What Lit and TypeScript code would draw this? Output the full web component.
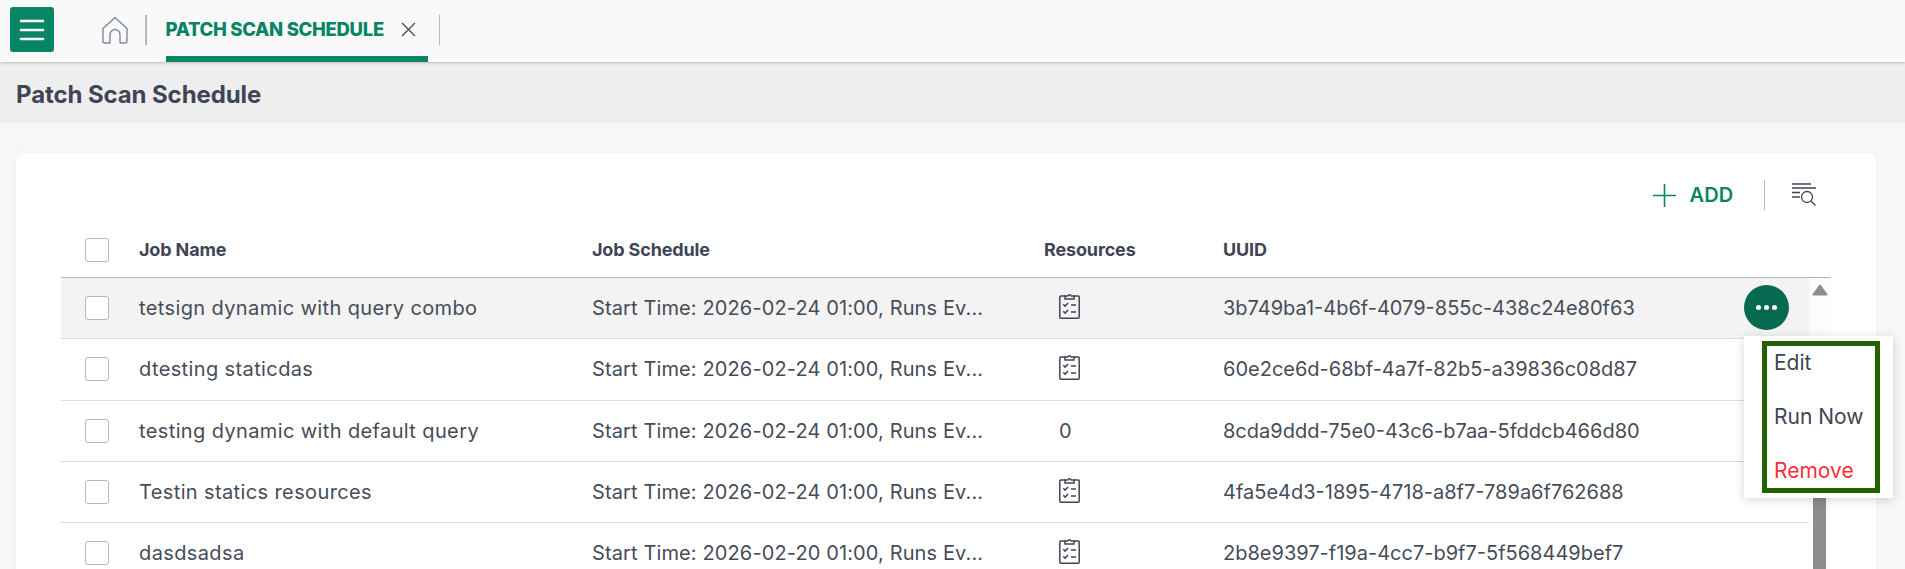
import { LitElement, html, css, svg } from 'lit';
import { customElement } from 'lit/decorators.js';

type Job = { name: string; schedule: string; resources: string | null; uuid: string };

const JOBS: Job[] = [
  { name: 'tetsign dynamic with query combo', schedule: '2026-02-24', resources: null, uuid: '3b749ba1-4b6f-4079-855c-438c24e80f63' },
  { name: 'dtesting staticdas', schedule: '2026-02-24', resources: null, uuid: '60e2ce6d-68bf-4a7f-82b5-a39836c08d87' },
  { name: 'testing dynamic with default query', schedule: '2026-02-24', resources: '0', uuid: '8cda9ddd-75e0-43c6-b7aa-5fddcb466d80' },
  { name: 'Testin statics resources', schedule: '2026-02-24', resources: null, uuid: '4fa5e4d3-1895-4718-a8f7-789a6f762688' },
  { name: 'dasdsadsa', schedule: '2026-02-20', resources: null, uuid: '2b8e9397-f19a-4cc7-b9f7-5f568449bef7' },
];

const clipboard = svg`<svg width="21" height="27" viewBox="0 0 21 27" fill="none" stroke="#3f4554" stroke-width="1.5">
  <path d="M6.500 4H1.800a1 1 0 0 0-1 1v20.200a1 1 0 0 0 1 1h17.400a1 1 0 0 0 1-1V5a1 1 0 0 0-1-1H14.500"/>
  <path d="M6 7V4h2.800a1.800 1.800 0 0 1 3.400 0H15v3z"/>
  <path d="M4.300 12.300l1.800 1.800 3-3.200M4.300 19.300l1.800 1.800 3-3.200M12 13h5M12 20h5"/>
</svg>`;

@customElement('app-root')
class AppRoot extends LitElement {
  static styles = css`
    :host {
      display: block;
      height: 569px;
      overflow: hidden;
      background: #f7f7f7;
      font-family: Inter, 'Liberation Sans', sans-serif;
      color: #3f4554;
    }
    .topbar {
      height: 62px;
      box-sizing: border-box;
      display: flex;
      align-items: center;
      background: #f9f9f9;
      box-shadow: 0 1px 3px rgba(0, 0, 0, 0.22);
      position: relative;
      padding: 0 0 3px 10px;
    }
    .menu-btn {
      width: 44px;
      height: 45px;
      border-radius: 3px;
      background: #088565;
      display: flex;
      align-items: center;
      justify-content: center;
    }
    .home {
      margin-left: 48px;
      display: flex;
    }
    .sep {
      width: 1.5px;
      height: 30px;
      background: #b5b8bc;
    }
    .sep.first {
      margin-left: 17px;
    }
    .tab {
      width: 262px;
      margin-left: 19px;
      height: 100%;
      box-sizing: border-box;
      display: flex;
      align-items: center;
      position: relative;
      color: #088565;
      font-weight: 800;
      font-size: 18.500px;
      letter-spacing: -0.3px;
      padding-bottom: 2px;
    }
    .tab::after {
      content: '';
      position: absolute;
      left: 0;
      right: 0;
      bottom: -3px;
      height: 6px;
      background: #088565;
    }
    .tab svg {
      margin-left: 17px;
      margin-top: 2px;
    }
    .tab-sep {
      margin-left: 11px;
    }
    .title {
      height: 61px;
      box-sizing: border-box;
      display: flex;
      align-items: center;
      padding: 3px 0 0 16px;
      background: #eeeeee;
      font-size: 24px;
      font-weight: 700;
      letter-spacing: -0.1px;
    }
    .card {
      margin: 30px 29px 0 16px;
      height: 500px;
      box-sizing: border-box;
      background: #fff;
      border-radius: 8px;
      padding: 0 45px;
      box-shadow: 0 0 6px rgba(0, 0, 0, 0.03);
      position: relative;
    }
    .tools {
      height: 69px;
      box-sizing: border-box;
      display: flex;
      align-items: center;
      justify-content: flex-end;
      padding: 27px 15px 12px 0;
    }
    .add {
      display: flex;
      align-items: center;
      color: #088565;
      font-weight: 600;
      font-size: 20px;
      letter-spacing: 0.2px;
    }
    .add svg {
      margin-right: 13px;
    }
    .tool-sep {
      width: 1.5px;
      height: 30px;
      background: #b5b8bc;
      margin: 0 26px 0 30px;
    }
    .row {
      display: grid;
      grid-template-columns: 54px 453px 452px 179px 1fr;
      align-items: center;
      padding-left: 24px;
      font-size: 20px;
      color: #474c59;
    }
    .name {
      letter-spacing: 0.38px;
    }
    .schedule {
      letter-spacing: 0.12px;
    }
    .head {
      height: 55px;
      font-size: 18px;
      font-weight: 700;
      color: #3f4554;
      letter-spacing: -0.15px;
      border-bottom: 1.500px solid #b0b3b8;
    }
    .body {
      display: grid;
      grid-template-columns: 1fr 22px;
    }
    .rows .row {
      height: 61.250px;
      box-sizing: border-box;
      border-bottom: 1.500px solid #dcdcdc;
      position: relative;
    }
    .rows .row.active {
      background: #f3f3f3;
    }
    .box {
      width: 24px;
      height: 24px;
      box-sizing: border-box;
      border: 1px solid #b5b8bc;
      border-radius: 3px;
      background: #fff;
    }
    .res {
      padding-left: 15px;
      display: flex;
    }
    .res svg {
      margin-bottom: 5px;
    }
    .dots {
      position: absolute;
      right: 20px;
      top: 7px;
      width: 45px;
      height: 45px;
      border-radius: 50%;
      background: #066a50;
      display: flex;
      align-items: center;
      justify-content: center;
      gap: 3px;
    }
    .dots i {
      width: 5px;
      height: 5px;
      border-radius: 50%;
      background: #fff;
    }
    .scroll {
      background: #fcfcfc;
      position: relative;
      height: 300px;
    }
    .arrow {
      position: absolute;
      left: 3px;
      top: 6px;
      display: block;
    }
    .thumb {
      position: absolute;
      left: 4px;
      top: 75px;
      bottom: 0;
      width: 13px;
      background: #8c8c8c;
    }
    .popup {
      position: absolute;
      left: 1728px;
      top: 183px;
      width: 149px;
      height: 162px;
      box-sizing: border-box;
      background: #fff;
      box-shadow: 0 2px 10px rgba(0, 0, 0, 0.16);
      padding: 5px 13px 5px 18px;
    }
    .popup-inner {
      height: 152px;
      box-sizing: border-box;
      border: 5px solid #256000;
      padding: 3px 0 0 7px;
      display: flex;
      flex-direction: column;
      font-size: 21px;
      line-height: 27px;
      gap: 27px;
    }
    .remove {
      color: #f5303c;
    }
  `;

  render() {
    return html`
      <div class="topbar">
        <div class="menu-btn">
          <svg width="26" height="22" viewBox="0 0 26 22" fill="none" stroke="#fff" stroke-width="2.600" stroke-linecap="round">
            <path d="M2 2h22M2 11h22M2 20h22" />
          </svg>
        </div>
        <div class="home">
          <svg width="26" height="28" viewBox="0 0 26 28" fill="none" stroke="#7f8a99" stroke-width="1.400" stroke-linejoin="round">
            <path d="M1 12.500L13 1.500l12 11v13a1.500 1.500 0 0 1-1.500 1.500H18v-8.500a5 5 0 0 0-10 0V27H2.500A1.500 1.500 0 0 1 1 25.500z" />
          </svg>
        </div>
        <div class="sep first"></div>
        <div class="tab">
          PATCH SCAN SCHEDULE
          <svg width="15" height="15" viewBox="0 0 15 15" stroke="#3f4554" stroke-width="1.200">
            <path d="M1 1l13 13M14 1L1 14" />
          </svg>
        </div>
        <div class="sep tab-sep"></div>
      </div>
      <div class="title">Patch Scan Schedule</div>
      <div class="card">
        <div class="tools">
          <div class="add">
            <svg width="23" height="23" viewBox="0 0 23 23" stroke="#088565" stroke-width="1.600"><path d="M11.500 0v23M0 11.500h23" /></svg>
            ADD
          </div>
          <div class="tool-sep"></div>
          <svg width="25" height="24" viewBox="0 0 25 24" fill="none" stroke="#3f4554" stroke-width="1.300">
            <path d="M1 1h19M1 5h24M1 9.500h8M1 14h8" />
            <circle cx="16" cy="14" r="5.500" />
            <path d="M20 18l4.500 4.500" />
          </svg>
        </div>
        <div class="row head">
          <div class="box"></div>
          <div>Job Name</div>
          <div>Job Schedule</div>
          <div>Resources</div>
          <div>UUID</div>
        </div>
        <div class="body">
          <div class="rows">
            ${JOBS.map(
              (job, i) => html`
                <div class="row ${i === 0 ? 'active' : ''}">
                  <div class="box"></div>
                  <div class="name">${job.name}</div>
                  <div class="schedule">Start Time: ${job.schedule} 01:00, Runs Ev...</div>
                  <div class="res">${job.resources ?? clipboard}</div>
                  <div>${job.uuid}</div>
                  ${i === 0 ? html`<div class="dots"><i></i><i></i><i></i></div>` : ''}
                </div>
              `
            )}
          </div>
          <div class="scroll">
            <svg class="arrow" width="16" height="12" viewBox="0 0 16 12" fill="#8c8c8c" stroke="#8c8c8c" stroke-width="2" stroke-linejoin="round">
              <path d="M8 1.500L1.500 10.500h13z" />
            </svg>
            <div class="thumb"></div>
          </div>
        </div>
        <div class="popup">
          <div class="popup-inner">
            <span>Edit</span>
            <span>Run Now</span>
            <span class="remove">Remove</span>
          </div>
        </div>
      </div>
    `;
  }
}

declare global {
  interface HTMLElementTagNameMap {
    'app-root': AppRoot;
  }
}
